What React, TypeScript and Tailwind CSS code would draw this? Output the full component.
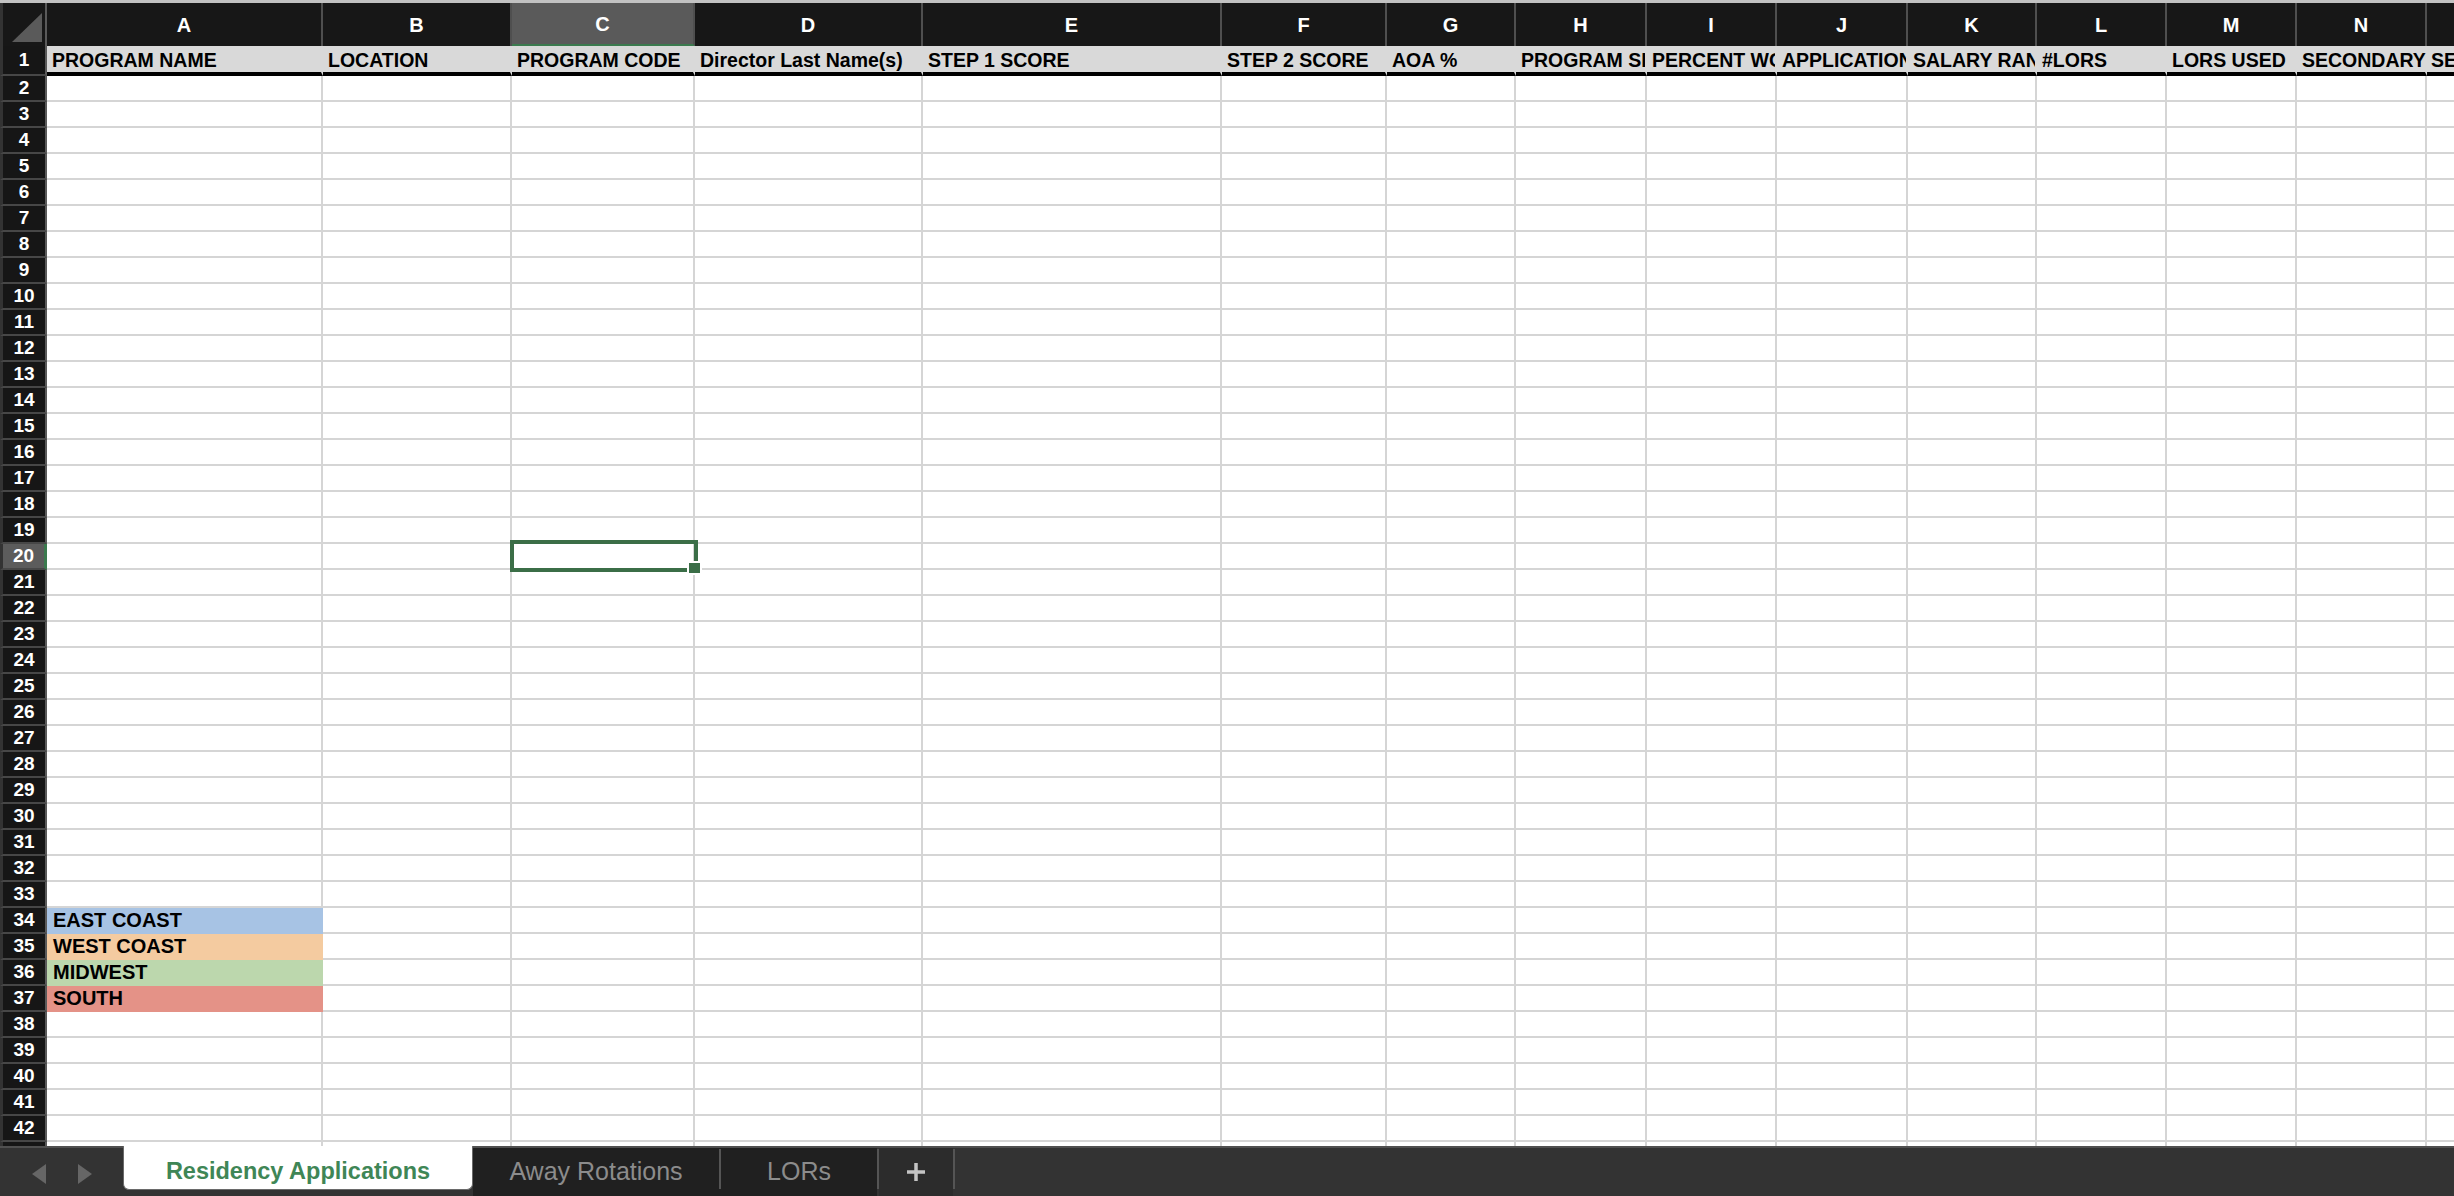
import React from 'react';

// column widths are measured off the sheet, separators included
const COLS = [
  { key: 'A', w: 'w-[276px]', title: 'PROGRAM NAME' },
  { key: 'B', w: 'w-[189px]', title: 'LOCATION' },
  { key: 'C', w: 'w-[183px]', title: 'PROGRAM CODE' },
  { key: 'D', w: 'w-[228px]', title: 'Director Last Name(s)' },
  { key: 'E', w: 'w-[299px]', title: 'STEP 1 SCORE' },
  { key: 'F', w: 'w-[165px]', title: 'STEP 2 SCORE' },
  { key: 'G', w: 'w-[129px]', title: 'AOA %' },
  { key: 'H', w: 'w-[131px]', title: 'PROGRAM SIZE' },
  { key: 'I', w: 'w-[130px]', title: 'PERCENT WOMEN' },
  { key: 'J', w: 'w-[131px]', title: 'APPLICATION FEE' },
  { key: 'K', w: 'w-[129px]', title: 'SALARY RANGE' },
  { key: 'L', w: 'w-[130px]', title: '#LORS' },
  { key: 'M', w: 'w-[130px]', title: 'LORS USED' },
  { key: 'N', w: 'w-[130px]', title: 'SECONDARY SENT', spill: true },
  { key: 'O', w: 'w-[200px]', title: '' },
];

const REGIONS: Record<number, { label: string; fill: string }> = {
  34: { label: 'EAST COAST', fill: 'bg-[#a7c3e4] border-[#a7c3e4]' },
  35: { label: 'WEST COAST', fill: 'bg-[#f4cba0] border-[#f4cba0]' },
  36: { label: 'MIDWEST', fill: 'bg-[#bcd7ad] border-[#bcd7ad]' },
  37: { label: 'SOUTH', fill: 'bg-[#e49287] border-[#e49287]' },
};

const ROWS = Array.from({ length: 42 }, (_, i) => i + 2);

function RowHead({ n, h }: { n: number; h: string }) {
  const sel = n === 20;
  return (
    <div
      className={
        h +
        ' flex w-[47px] shrink-0 items-center justify-center border-b-2 border-l-[3px] border-b-[#474747] border-l-[#333333] text-[19px] font-bold text-white ' +
        (sel ? 'border-r-[3px] border-r-[#3b7a4e] bg-[#5c5c5c]' : 'border-r-2 border-r-[#5a5a5a] bg-[#161616]')
      }
    >
      {n}
    </div>
  );
}

function ColumnHeader() {
  return (
    <div className="flex h-[43px] shrink-0 bg-[#171717]">
      <div className="flex w-[47px] shrink-0 border-l-[3px] border-r-2 border-l-[#333333] border-r-[#5a5a5a]">
        <svg width="42" height="43" viewBox="0 0 42 43">
          <polygon points="9,39 39,39 39,10" fill="#5a5a5a" />
        </svg>
      </div>
      {COLS.map((c) => (
        <div
          key={c.key}
          className={
            c.w +
            ' flex shrink-0 items-center justify-center border-r-2 border-r-[#4f4f4f] text-[20px] font-bold text-white ' +
            (c.key === 'C' ? 'border-b-2 border-b-[#3b7a4e] bg-[#5a5a5a]' : '')
          }
        >
          {c.key}
        </div>
      ))}
    </div>
  );
}

function TitleRow() {
  return (
    <div className="flex h-[30px] shrink-0">
      <RowHead n={1} h="h-[30px]" />
      {COLS.map((c) => (
        <div
          key={c.key}
          className={
            c.w +
            ' flex shrink-0 items-center whitespace-nowrap border-b-4 border-r-2 border-b-black border-r-[#d9d9d9] bg-[#d9d9d9] pl-[5px] pt-[3px] text-[19.5px] font-bold text-black ' +
            (c.spill ? 'relative z-10 overflow-visible' : 'overflow-hidden')
          }
        >
          {c.title}
        </div>
      ))}
    </div>
  );
}

function Row({ n }: { n: number }) {
  const region = REGIONS[n];
  return (
    <div className="flex h-[26px] shrink-0">
      <RowHead n={n} h="h-[26px]" />
      {COLS.map((c, i) => (
        <div
          key={c.key}
          className={
            c.w +
            ' flex shrink-0 items-center border-b-2 border-r-2 pl-[6px] text-[20px] font-bold text-black ' +
            (i === 0 && region ? region.fill : 'border-[#d5d5d5]')
          }
        >
          {i === 0 && region ? region.label : null}
        </div>
      ))}
    </div>
  );
}

function TabBar() {
  return (
    <div className="flex h-[50px] shrink-0 border-t-2 border-[#505050] bg-[#333333]">
      <div className="flex w-[123px] shrink-0 gap-[32px] pl-[32px] pt-[16px]">
        <svg width="14" height="20" viewBox="0 0 14 20">
          <polygon points="14,0 0,10 14,20" fill="#666666" />
        </svg>
        <svg width="14" height="20" viewBox="0 0 14 20">
          <polygon points="0,0 14,10 0,20" fill="#666666" />
        </svg>
      </div>
      <div className="-mt-[2px] flex h-[44px] w-[350px] shrink-0 items-center justify-center rounded-b-[6px] border-x border-b border-[#6a6a6a] bg-white pt-[8px] text-[23.5px] font-bold text-[#3f8656]">
        Residency Applications
      </div>
      <div className="flex w-[246px] shrink-0 items-center justify-center bg-[#202020] text-[25px] text-[#8c8c8c]">
        Away Rotations
      </div>
      <div className="w-[2px] shrink-0 bg-[#202020]">
        <div className="mt-[1px] h-[40px] bg-[#555555]" />
      </div>
      <div className="flex w-[156px] shrink-0 items-center justify-center bg-[#202020] text-[25px] text-[#8c8c8c]">
        LORs
      </div>
      <div className="w-[2px] shrink-0">
        <div className="mt-[1px] h-[40px] bg-[#555555]" />
      </div>
      <div className="flex w-[74px] shrink-0 items-center justify-center bg-[#2c2c2c]">
        <svg width="20" height="20" viewBox="0 0 20 20">
          <path d="M10 1v18M1 10h18" stroke="#c4c4c4" strokeWidth="3.5" />
        </svg>
      </div>
      <div className="w-[2px] shrink-0">
        <div className="mt-[1px] h-[40px] bg-[#555555]" />
      </div>
      <div className="flex-1" />
    </div>
  );
}

export default function App() {
  return (
    <div className="flex h-[1196px] w-[2454px] flex-col overflow-hidden bg-white font-['Liberation_Sans',Arial,sans-serif]">
      <div className="h-[3px] shrink-0 bg-[#c2c2c2]" />
      <div className="relative flex min-h-0 flex-1 flex-col overflow-hidden">
        <ColumnHeader />
        <TitleRow />
        {ROWS.map((n) => (
          <Row key={n} n={n} />
        ))}
        {/* active cell C20 */}
        <div className="absolute left-[510px] top-[537px] h-[32px] w-[188px] border-4 border-[#3b6e47]">
          <div className="absolute left-[175px] top-[19px] h-[10px] w-[11px] bg-[#3b6e47] ring-2 ring-white" />
        </div>
      </div>
      <TabBar />
    </div>
  );
}
